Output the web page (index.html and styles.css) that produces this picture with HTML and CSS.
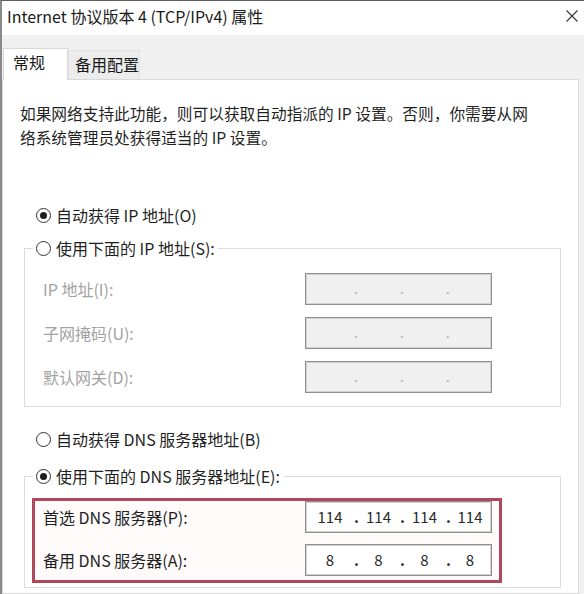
FILE: index.html
```html
<!DOCTYPE html>
<html lang="zh-CN">
<head>
<meta charset="utf-8">
<title>Internet 协议版本 4 (TCP/IPv4) 属性</title>
<link rel="stylesheet" href="styles.css">
</head>
<body>
<div class="window">
  <div class="titlebar">
    <span class="title">Internet 协议版本 4 (TCP/IPv4) 属性</span>
    <svg class="close" width="12" height="12" viewBox="0 0 12 12"><path d="M0.5 0.5 L11.5 11.5 M11.5 0.5 L0.5 11.5" stroke="#333" stroke-width="1.1" fill="none"/></svg>
  </div>
  <div class="tabstrip">
    <div class="tab active">常规</div>
    <div class="tab">备用配置</div>
  </div>
  <div class="panel">
    <p class="intro">如果网络支持此功能，则可以获取自动指派的 IP 设置。否则，你需要从网<br>络系统管理员处获得适当的 IP 设置。</p>

    <div class="radio-row first"><span class="radio checked"></span>自动获得 IP 地址(O)</div>

    <fieldset class="group ipgroup">
      <legend><span class="radio"></span>使用下面的 IP 地址(S):</legend>
      <div class="grid ipgrid">
        <span class="label disabled">IP 地址(I):</span>
        <div class="ipbox off"><span class="seg s1"></span><span class="dot">.</span><span class="seg"></span><span class="dot">.</span><span class="seg"></span><span class="dot">.</span><span class="seg last"></span></div>
        <span class="label disabled">子网掩码(U):</span>
        <div class="ipbox off"><span class="seg s1"></span><span class="dot">.</span><span class="seg"></span><span class="dot">.</span><span class="seg"></span><span class="dot">.</span><span class="seg last"></span></div>
        <span class="label disabled">默认网关(D):</span>
        <div class="ipbox off"><span class="seg s1"></span><span class="dot">.</span><span class="seg"></span><span class="dot">.</span><span class="seg"></span><span class="dot">.</span><span class="seg last"></span></div>
      </div>
    </fieldset>

    <div class="radio-row dns-auto"><span class="radio"></span>自动获得 DNS 服务器地址(B)</div>

    <fieldset class="group dnsgroup">
      <legend><span class="radio checked"></span>使用下面的 DNS 服务器地址(E):</legend>
      <div class="highlight">
        <div class="grid dnsgrid">
          <span class="label">首选 DNS 服务器(P):</span>
          <div class="ipbox"><span class="seg s1">114</span><span class="dot">.</span><span class="seg">114</span><span class="dot">.</span><span class="seg">114</span><span class="dot">.</span><span class="seg last">114</span></div>
          <span class="label">备用 DNS 服务器(A):</span>
          <div class="ipbox"><span class="seg s1">8</span><span class="dot">.</span><span class="seg">8</span><span class="dot">.</span><span class="seg">8</span><span class="dot">.</span><span class="seg last">8</span></div>
        </div>
      </div>
    </fieldset>
  </div>
</div>
</body>
</html>
```

FILE: styles.css
```css
* { box-sizing: border-box; }

html, body {
  margin: 0;
  padding: 0;
  background: #ffffff;
}

body {
  font-family: "Noto Sans CJK SC", "Noto Sans", sans-serif;
  font-size: 16px;
  color: #1f1f1f;
}

.window {
  width: 584px;
  height: 594px;
  overflow: hidden;
  border-top: 1px solid #5e5e5e;
  border-left: 2px solid #8a8a8a;
  background: #f0f0f0;
  display: flex;
  flex-direction: column;
}

.titlebar {
  height: 34px;
  flex: none;
  background: #ffffff;
  display: flex;
  align-items: center;
  justify-content: space-between;
  padding: 0 6px 0 5px;
}

.title {
  font-size: 16px;
  line-height: 20px;
  color: #1a1a1a;
  margin-top: -4px;
}

.close {
  display: block;
  margin-top: -4px;
}

.tabstrip {
  height: 44px;
  flex: none;
  background: #f0f0f0;
  display: flex;
  align-items: flex-end;
  padding-left: 1px;
}

.tab {
  height: 29px;
  width: 72px;
  padding: 1px 0 0 6px;
  line-height: 24px;
  font-size: 16px;
  color: #1a1a1a;
  background: #ececec;
  border: 1px solid #e2e2e2;
  border-bottom: none;
}

.tab.active {
  position: relative;
  z-index: 1;
  width: 65px;
  height: 32px;
  margin-bottom: -1px;
  padding-left: 9px;
  background: #ffffff;
  border-color: #d9d9d9;
}

.panel {
  flex: 1;
  margin-right: 5px;
  background: #ffffff;
  border: 1px solid #d9d9d9;
}

.intro {
  margin: 22px 0 0 17px;
  line-height: 24px;
  font-size: 15.7px;
  white-space: nowrap;
  color: #1f1f1f;
}

.radio-row {
  display: flex;
  align-items: center;
  height: 24px;
  padding-left: 33px;
  line-height: 24px;
}

.radio-row.first { margin-top: 53px; }
.radio-row.dns-auto { margin-top: 20px; }

.radio {
  width: 15px;
  height: 15px;
  flex: none;
  border: 1px solid #333333;
  border-radius: 50%;
  background: #ffffff;
  margin-right: 5px;
  display: inline-flex;
  align-items: center;
  justify-content: center;
}

.radio.checked::after {
  content: "";
  width: 7px;
  height: 7px;
  border-radius: 50%;
  background: #1e1e1e;
}

.group {
  margin: 0 17px 0 21px;
  padding: 0;
  border: 1px solid #dcdcdc;
  min-width: 0;
}

.group legend {
  display: flex;
  align-items: center;
  height: 24px;
  line-height: 24px;
  margin-left: 8px;
  padding: 0 3px;
}

.ipgroup {
  margin-top: 9px;
  padding: 13px 0 13px 0;
}

.ipgrid { margin-left: 18px; }

.dnsgroup {
  margin-top: 13px;
  padding: 10px 0 4px 0;
}

.grid {
  display: grid;
  grid-template-columns: 262px 187px;
  grid-auto-rows: 32px;
  row-gap: 12px;
  align-items: center;
}

.dnsgrid { row-gap: 11px; }

.label {
  line-height: 24px;
  color: #1f1f1f;
}

.label.disabled { color: #a2a2a2; }

.ipbox {
  height: 32px;
  display: flex;
  align-items: center;
  border: 1px solid #8f8f8f;
  box-shadow: inset 0 0 0 1px #d2d2d2;
  background: #ffffff;
  font-size: 15px;
  color: #2a2a2a;
}

.ipbox.off {
  background: #f0f0f0;
  color: #9a9a9a;
}

.seg {
  width: 43px;
  text-align: center;
  line-height: 30px;
}

.seg.s1 { width: 48px; }
.seg.last { flex: 1; }

.dot {
  width: 3px;
  text-align: center;
  line-height: 30px;
  font-size: 15px;
  font-weight: 700;
}

.ipbox.off .dot {
  font-size: 13px;
  font-weight: 400;
  color: #9a9a9a;
}

.highlight {
  width: 470px;
  margin-left: 7px;
  border: 3px solid #b0475a;
  background: #fffbfb;
  padding: 0 7px 4px 8px;
}
```
